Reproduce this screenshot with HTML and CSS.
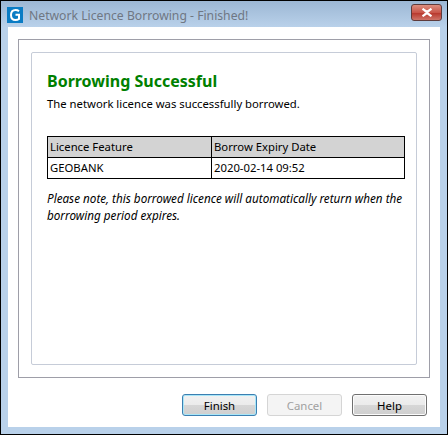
FILE: index.html
```html
<!DOCTYPE html>
<html lang="en">
<head>
<meta charset="utf-8">
<title>Network Licence Borrowing - Finished!</title>
<link rel="stylesheet" href="styles.css">
</head>
<body>
<div class="window">
  <header class="titlebar">
    <svg class="app-icon" width="16" height="16" viewBox="0 0 16 16" aria-hidden="true">
      <rect width="16" height="16" fill="#0a7cc4"/>
      <path d="M12 4.2C11 3.3 9.8 3 8.6 3 5.8 3 4 5 4 8s1.8 5 4.5 5c1.300 0 2.500-.3 3.500-1V7.800H8.500" fill="none" stroke="#fff" stroke-width="2"/>
    </svg>
    <span class="title-text">Network Licence Borrowing - Finished!</span>
    <button class="close" aria-label="Close">
      <svg width="12" height="9" viewBox="0 0 12 9" aria-hidden="true">
        <path d="M1.500 .8l4.500 3 4.500-3M1.500 8.200l4.500-3 4.500 3M2 1l8 7M10 1L2 8" fill="none" stroke="#fff" stroke-width="2.200"/>
      </svg>
    </button>
  </header>
  <main class="client">
    <div class="frame">
      <section class="page">
        <h1 class="heading">Borrowing Successful</h1>
        <p class="lead">The network licence was successfully borrowed.</p>
        <table class="licences">
          <tr class="head-row"><td class="col-a">Licence Feature</td><td>Borrow Expiry Date</td></tr>
          <tr><td class="col-a">GEOBANK</td><td>2020-02-14 09:52</td></tr>
        </table>
        <p class="note">Please note, this borrowed licence will automatically return when the borrowing period expires.</p>
      </section>
    </div>
    <footer class="actions">
      <button class="btn default">Finish</button>
      <button class="btn" disabled>Cancel</button>
      <button class="btn">Help</button>
    </footer>
  </main>
</div>
</body>
</html>
```

FILE: styles.css
```css
html, body {
  margin: 0;
  padding: 0;
  background: #b9d1ea;
}

.window {
  box-sizing: border-box;
  width: 448px;
  height: 435px;
  border: 1px solid #000;
  background: #b9d1ea;
  display: flex;
  flex-direction: column;
  font-family: "Noto Sans", "Open Sans", sans-serif;
  font-size: 11.3px;
  color: #000;
}

.titlebar {
  flex: none;
  height: 26px;
  display: flex;
  align-items: center;
  padding: 0 6px;
  background: linear-gradient(#9cb7d4, #b9d1ea);
}

.app-icon {
  flex: none;
  margin-right: 6px;
  margin-top: 2px;
}

.title-text {
  flex: 1;
  color: #6f7783;
  font-size: 12.2px;
  margin-top: 2px;
}

.close {
  width: 31px;
  height: 17px;
  padding: 0;
  margin: -4px -1px 0 0;
  display: flex;
  align-items: center;
  justify-content: center;
  border: 1px solid #5e3b3b;
  border-radius: 3px;
  background: linear-gradient(#dc8f80, #c9564a 50%, #b8392e 55%, #cf7468);
}

.client {
  flex: 1;
  margin: 0 7px 7px;
  background: #fff;
  display: flex;
  flex-direction: column;
  padding: 12px 10px 10px;
  min-height: 0;
}

.frame {
  flex: none;
  box-sizing: border-box;
  height: 339px;
  border: 1px solid #9e9ea8;
  padding: 12px;
}

.page {
  box-sizing: border-box;
  height: 100%;
  border: 1px solid #c6ccd8;
  border-radius: 2px;
  padding: 18px 11px 0 15px;
}

.heading {
  margin: 0;
  font-size: 16px;
  line-height: 20px;
  font-weight: 700;
  color: #008000;
}

.lead {
  margin: 5px 0 0;
  line-height: 16px;
}

.licences {
  width: 358px;
  margin-top: 24px;
  border-collapse: collapse;
  table-layout: fixed;
}

.licences td {
  height: 20px;
  padding: 0 2px;
  border: 1px solid #000;
  line-height: 16px;
}

.col-a {
  width: 159px;
}

.head-row td {
  background: #d3d3d3;
}

.note {
  margin: 11px 0 0;
  width: 362px;
  font-size: 11.7px;
  font-style: italic;
  line-height: 17px;
}

.actions {
  flex: 1;
  display: flex;
  justify-content: flex-end;
  align-items: flex-start;
  gap: 10px;
  padding: 16px 3px 0 0;
}

.btn {
  width: 75px;
  height: 22px;
  padding: 0;
  font: inherit;
  font-size: 11.4px;
  color: #000;
  border: 1px solid #707070;
  border-radius: 3px;
  background: linear-gradient(#f2f2f2, #ebebeb 48%, #d6d6d6 52%, #cfcfcf);
  box-shadow: inset 0 0 0 1px #fcfcfc;
}

.btn.default {
  border-color: #3c7fb1;
  box-shadow: inset 0 0 0 1px #a8e6f8;
}

.btn:disabled {
  color: #a0a0a0;
  border-color: #d5d5d5;
  background: #f4f4f4;
  box-shadow: none;
}
```
